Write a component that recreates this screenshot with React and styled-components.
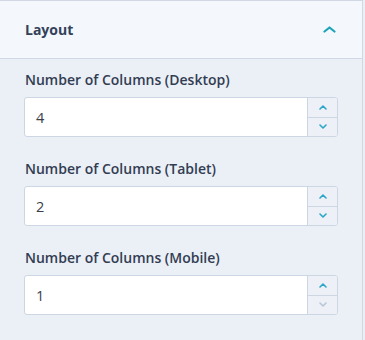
import React from "react";
import styled, { createGlobalStyle } from "styled-components";

const Global = createGlobalStyle`
  html, body { margin: 0; padding: 0; background: #ebeff6; }
  body { font-family: "Open Sans", "Noto Sans", sans-serif; }
`;

const Panel = styled.div`
  width: 363px;
  min-height: 340px;
  box-sizing: border-box;
  border-top: 1px solid #cfd8e4;
  border-right: 1px solid #cfd8e4;
  background: #ebeff6;
`;

const Header = styled.div`
  height: 58px;
  box-sizing: border-box;
  display: flex;
  align-items: center;
  justify-content: space-between;
  padding: 0 26px 0 25px;
  background: #f4f7fb;
  border-bottom: 1px solid #cfd8e4;
`;

const Title = styled.span`
  font-size: 14px;
  font-weight: 700;
  color: #33415a;
`;

const Body = styled.div`
  display: flex;
  flex-direction: column;
  gap: 23px;
  padding: 12px 24px 0 24px;
`;

const Field = styled.div`
  display: flex;
  flex-direction: column;
  gap: 9px;
`;

const Label = styled.label`
  font-size: 14px;
  font-weight: 600;
  color: #323d52;
  padding-left: 1px;
  line-height: 17px;
`;

const InputBox = styled.div`
  display: flex;
  height: 40px;
  box-sizing: border-box;
  border: 1px solid #cdd6e3;
  border-radius: 3px;
  overflow: hidden;
  background: #ffffff;
`;

const Value = styled.div`
  flex: 1;
  display: flex;
  align-items: center;
  padding-left: 11px;
  font-size: 14.5px;
  color: #3a3f4a;
`;

const Spinner = styled.div`
  width: 29px;
  display: flex;
  flex-direction: column;
  border-left: 1px solid #cdd6e3;
  background: #edf1f7;
`;

const SpinBtn = styled.div`
  flex: 1;
  display: flex;
  align-items: center;
  justify-content: center;
  & + & { border-top: 1px solid #cdd6e3; }
  color: ${(p) => (p.$disabled ? "#b8c6d8" : "#2aa6c9")};
`;

const Chevron = ({ down }) => (
  <svg width="8" height="5" viewBox="0 0 8 5" fill="none">
    <path
      d={down ? "M1 1 L4 4 L7 1" : "M1 4 L4 1 L7 4"}
      stroke="currentColor"
      strokeWidth="1.6"
      strokeLinecap="round"
      strokeLinejoin="round"
    />
  </svg>
);

const HeaderChevron = styled.span`
  color: #1ba3b8;
  display: flex;
`;

const NumberField = ({ label, value, min }) => (
  <Field>
    <Label>{label}</Label>
    <InputBox>
      <Value>{value}</Value>
      <Spinner>
        <SpinBtn>
          <Chevron />
        </SpinBtn>
        <SpinBtn $disabled={min}>
          <Chevron down />
        </SpinBtn>
      </Spinner>
    </InputBox>
  </Field>
);

export default function App() {
  return (
    <>
      <Global />
      <Panel>
        <Header>
          <Title>Layout</Title>
          <HeaderChevron>
            <svg width="13" height="7" viewBox="0 0 13 7" fill="none">
              <path d="M1.5 5.5 L6.5 1.5 L11.5 5.5" stroke="currentColor" strokeWidth="2.2" strokeLinecap="round" strokeLinejoin="round" />
            </svg>
          </HeaderChevron>
        </Header>
        <Body>
          <NumberField label="Number of Columns (Desktop)" value="4" />
          <NumberField label="Number of Columns (Tablet)" value="2" />
          <NumberField label="Number of Columns (Mobile)" value="1" min />
        </Body>
      </Panel>
    </>
  );
}
